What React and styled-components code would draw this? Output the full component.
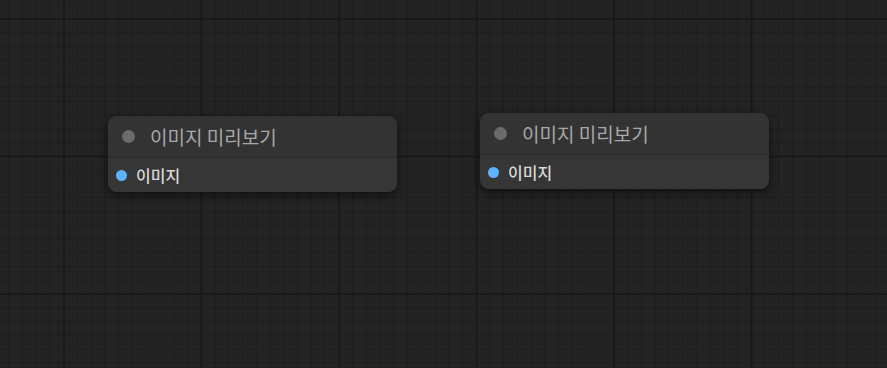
import React from "react";
import styled, { createGlobalStyle } from "styled-components";

const Global = createGlobalStyle`
  html, body { margin: 0; padding: 0; background: #232323; }
  body { font-family: "Noto Sans CJK KR", "Noto Sans", sans-serif; }
`;

const Canvas = styled.div`
  position: relative;
  width: 887px;
  height: 368px;
  overflow: hidden;
  background-color: #232323;
  background-image:
    linear-gradient(to right, #191919 2px, transparent 2px),
    linear-gradient(to bottom, #191919 2px, transparent 2px),
    linear-gradient(to right, #1d1d1d 1px, transparent 1px),
    linear-gradient(to bottom, #1d1d1d 1px, transparent 1px);
  background-size: 137.5px 137.5px, 137.5px 137.5px, 13.75px 13.75px, 13.75px 13.75px;
  background-position: 63px 0, 0 18px, 8.25px 0, 0 4.75px;
`;

const Node = styled.div`
  position: absolute;
  width: 289px;
  border-radius: 9px;
  background: #353535;
  box-shadow: 0 3px 8px rgba(0, 0, 0, 0.55);
  display: flex;
  flex-direction: column;
  overflow: hidden;
`;

const Header = styled.div`
  height: 41px;
  display: flex;
  align-items: center;
  gap: 15px;
  padding-left: 14px;
  border-bottom: 1px solid #2b2b2b;
  background: #333333;
`;

const StatusDot = styled.span`
  width: 13px;
  height: 13px;
  border-radius: 50%;
  background: #6b6b6b;
  flex: none;
`;

const Title = styled.span`
  font-size: 19px;
  color: #a8a8a8;
  line-height: 1;
`;

const Row = styled.div`
  height: 34px;
  display: flex;
  align-items: center;
  gap: 9px;
  padding-left: 8px;
  background: #363636;
`;

const Socket = styled.span`
  width: 11px;
  height: 11px;
  border-radius: 50%;
  background: ${(p) => p.$color};
  flex: none;
`;

const Label = styled.span`
  font-size: 16px;
  font-weight: 500;
  color: #d8d8d8;
  line-height: 1;
`;

const nodes = [
  { id: 1, x: 108, y: 116 },
  { id: 2, x: 480, y: 113 },
];

export default function App() {
  return (
    <>
      <Global />
      <Canvas>
        {nodes.map((n) => (
          <Node key={n.id} style={{ left: n.x, top: n.y }}>
            <Header>
              <StatusDot />
              <Title>이미지 미리보기</Title>
            </Header>
            <Row>
              <Socket $color="#5eb2fb" />
              <Label>이미지</Label>
            </Row>
          </Node>
        ))}
      </Canvas>
    </>
  );
}
